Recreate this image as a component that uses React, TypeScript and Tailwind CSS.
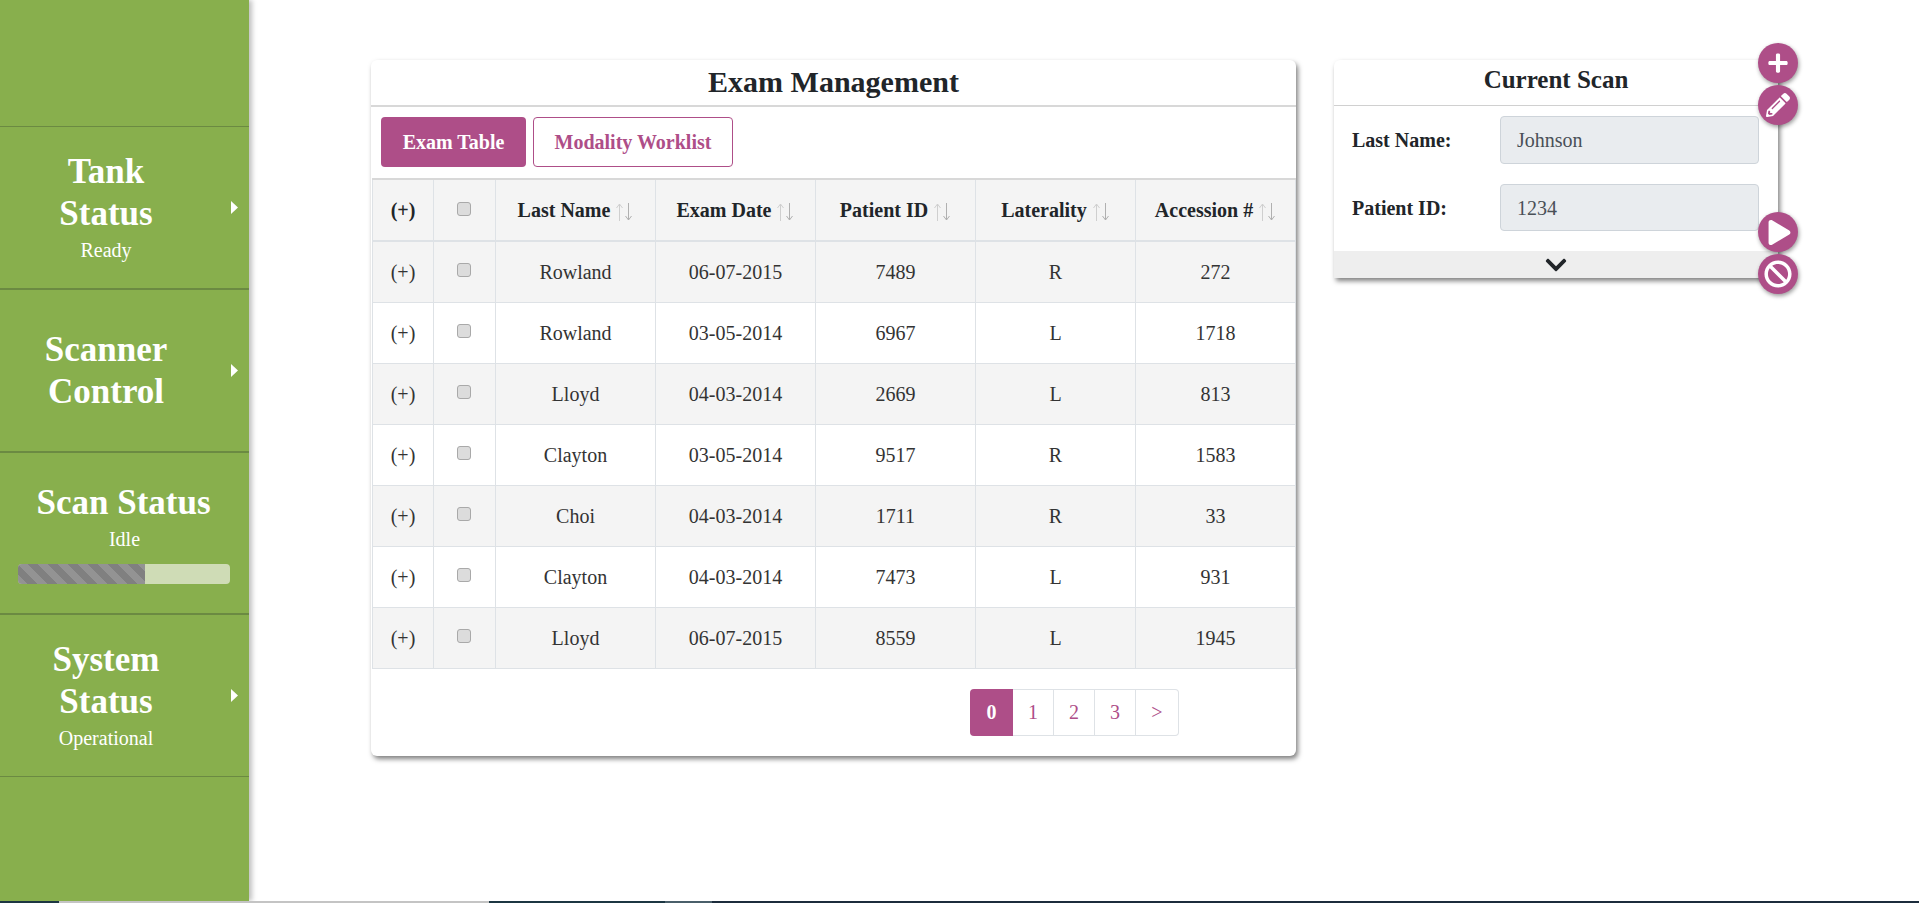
import { FaBan, FaChevronDown, FaPencilAlt, FaPlay, FaPlus } from "react-icons/fa";

const rows = [
	["Rowland", "06-07-2015", "7489", "R", "272"],
	["Rowland", "03-05-2014", "6967", "L", "1718"],
	["Lloyd", "04-03-2014", "2669", "L", "813"],
	["Clayton", "03-05-2014", "9517", "R", "1583"],
	["Choi", "04-03-2014", "1711", "R", "33"],
	["Clayton", "04-03-2014", "7473", "L", "931"],
	["Lloyd", "06-07-2015", "8559", "L", "1945"],
];

const columns = ["Last Name", "Exam Date", "Patient ID", "Laterality", "Accession #"];

function Caret() {
	return (
		<svg viewBox="0 0 7 13" className="h-[13px] w-[7px] shrink-0 fill-white">
			<polygon points="0,0 7,6.5 0,13" />
		</svg>
	);
}

function SortArrows() {
	return (
		<svg viewBox="0 0 18 18" className="ml-[5px] inline-block h-[18px] w-[18px] align-[-4px] fill-none">
			<g stroke="#cfcfcf" strokeWidth="1">
				<path d="M4.5 18V1" />
				<path d="M1.5 5L4.5 1L7.5 5" />
			</g>
			<g stroke="#b0b0b0" strokeWidth="1">
				<path d="M13.5 0V17" />
				<path d="M10.5 13L13.5 17L16.5 13" />
			</g>
		</svg>
	);
}

function NavItem({ title, status, className }: { title: string[]; status?: string; className: string }) {
	return (
		<div className={`flex items-center border-[#6b8a42] pr-[11px] ${className}`}>
			<div className={`w-[212px] text-center text-white ${status ? "pb-[2px]" : ""}`}>
				{title.map((line) => (
					<div key={line} className="text-[35px] leading-[42px] font-bold">
						{line}
					</div>
				))}
				{status && <div className="mt-[3px] text-[20px] leading-[24px]">{status}</div>}
			</div>
			<div className="ml-[19px]">
				<Caret />
			</div>
		</div>
	);
}

function Checkbox() {
	return <div className="mb-[3px] ml-[23px] h-[14px] w-[14px] rounded-[3px] border border-[#a9a9a9] bg-[#dcdcdc]" />;
}

function RoundButton({ className, children }: { className: string; children: React.ReactNode }) {
	return (
		<div
			className={`absolute right-[-20px] flex h-[40px] w-[40px] items-center justify-center rounded-full bg-[#ae4e88] text-white shadow-[1px_2px_4px_rgba(0,0,0,0.4)] ${className}`}
		>
			{children}
		</div>
	);
}

function FormRow({ label, value, height }: { label: string; value: string; height: string }) {
	return (
		<div className="flex items-center">
			<div className="w-[166px] pl-[18px] text-[20px] font-bold">{label}</div>
			<div className={`flex w-[259px] items-center rounded-[4px] border border-[#ced4da] bg-[#e9ecef] pl-[16px] text-[20px] text-[#495057] ${height}`}>
				{value}
			</div>
		</div>
	);
}

export default function App() {
	return (
		<div className="flex h-[903px] flex-col overflow-hidden bg-white font-['Liberation_Serif',serif] text-[#212529]">
			<div className="flex flex-1">
				<aside className="w-[249px] shrink-0 bg-[#88af4d] shadow-[3px_0_5px_rgba(0,0,0,0.25)]">
					<div className="h-[127px] border-b border-[#6b8a42]" />
					<NavItem title={["Tank", "Status"]} status="Ready" className="h-[163px] border-b-2" />
					<NavItem title={["Scanner", "Control"]} className="h-[163px] border-b-2" />
					<div className="h-[162px] border-b-2 border-[#6b8a42] px-[18px] pt-[29px] text-center text-white">
						<div className="mr-[2px] text-[35px] leading-[42px] font-bold">Scan Status</div>
						<div className="mt-[3px] text-[20px] leading-[24px]">Idle</div>
						<div className="mt-[13px] flex h-[20px] w-[212px] overflow-hidden rounded-[4px] bg-[#cfdcb6]">
							<div className="h-full w-[127px] bg-[#808080] bg-[linear-gradient(45deg,rgba(255,255,255,0.15)_25%,transparent_25%,transparent_50%,rgba(255,255,255,0.15)_50%,rgba(255,255,255,0.15)_75%,transparent_75%,transparent)] bg-[length:20px_20px]" />
						</div>
					</div>
					<NavItem title={["System", "Status"]} status="Operational" className="h-[162px] border-b" />
				</aside>

				<main className="flex flex-1 items-start gap-[38px] pt-[60px] pl-[122px]">
					<section className="h-[696px] w-[925px] rounded-[6px] bg-white shadow-[2px_3px_5px_rgba(0,0,0,0.5)]">
						<h1 className="h-[47px] border-b-2 border-[#d8d8d8] text-center text-[30px] leading-[44px] font-bold">
							Exam Management
						</h1>
						<div className="flex h-[71px] items-start gap-[7px] pt-[10px] pl-[10px]">
							<button className="h-[50px] w-[145px] rounded-[4px] bg-[#ae4e88] text-[20px] font-bold text-white">
								Exam Table
							</button>
							<button className="h-[50px] w-[200px] rounded-[4px] border border-[#ae4e88] text-[20px] font-bold text-[#ae4e88]">
								Modality Worklist
							</button>
						</div>
						<table className="ml-px w-[923px] table-fixed border-collapse border-t-2 border-[#d8d8d8] text-center text-[20px]">
							<colgroup>
								<col className="w-[61px]" />
								<col className="w-[62px]" />
								<col className="w-[160px]" />
								<col className="w-[160px]" />
								<col className="w-[160px]" />
								<col className="w-[160px]" />
								<col className="w-[160px]" />
							</colgroup>
							<thead>
								<tr className="h-[62px] bg-[#f4f4f4]">
									<th className="border border-b-2 border-[#dee2e6] font-bold">(+)</th>
									<th className="border border-b-2 border-[#dee2e6]">
										<Checkbox />
									</th>
									{columns.map((c) => (
										<th key={c} className="border border-b-2 border-[#dee2e6] font-bold whitespace-nowrap">
											{c}
											<SortArrows />
										</th>
									))}
								</tr>
							</thead>
							<tbody>
								{rows.map((r, i) => (
									<tr key={i} className={`h-[61px] ${i % 2 === 0 ? "bg-[#f4f4f4]" : "bg-white"}`}>
										<td className="border border-[#dee2e6] text-[#333333]">(+)</td>
										<td className="border border-[#dee2e6]">
											<Checkbox />
										</td>
										{r.map((v, j) => (
											<td key={j} className="border border-[#dee2e6] text-[#333333]">
												{v}
											</td>
										))}
									</tr>
								))}
							</tbody>
						</table>
						<div className="mt-[20px] ml-[599px] flex h-[47px] w-[209px] text-[20px] text-[#ae4e88]">
							<div className="flex w-[43px] items-center justify-center rounded-l-[4px] bg-[#ae4e88] font-bold text-white">0</div>
							{["1", "2", "3"].map((p) => (
								<div key={p} className="flex w-[41px] items-center justify-center border-y border-r border-[#dee2e6]">
									{p}
								</div>
							))}
							<div className="flex w-[43px] items-center justify-center rounded-r-[4px] border-y border-r border-[#dee2e6]">&gt;</div>
						</div>
					</section>

					<section className="relative h-[218px] w-[444px] rounded-t-[6px] bg-white shadow-[2px_3px_5px_rgba(0,0,0,0.5)]">
						<h2 className="h-[46px] border-b border-[#d0d0d0] text-center text-[25px] leading-[40px] font-bold">
							Current Scan
						</h2>
						<div className="flex h-[145px] flex-col gap-[20px] pt-[10px]">
							<FormRow label="Last Name:" value="Johnson" height="h-[48px]" />
							<FormRow label="Patient ID:" value="1234" height="h-[47px]" />
						</div>
						<div className="flex h-[27px] items-center justify-center bg-[#eeeeee]">
							<FaChevronDown className="h-[24px] w-[24px]" />
						</div>
						<RoundButton className="top-[-17px]">
							<FaPlus className="h-[22px] w-[22px]" />
						</RoundButton>
						<RoundButton className="top-[25px]">
							<FaPencilAlt className="h-[24px] w-[24px]" />
						</RoundButton>
						<RoundButton className="top-[152px]">
							<FaPlay className="ml-[2px] h-[25px] w-[25px]" />
						</RoundButton>
						<RoundButton className="top-[194px]">
							<FaBan className="h-[28px] w-[28px]" />
						</RoundButton>
					</section>
				</main>
			</div>
			<div className="flex h-[2px] shrink-0 bg-[#1c2c3c]">
				<div className="w-[59px] bg-[#1c3642]" />
				<div className="w-[430px] bg-[#c4c4c4]" />
				<div className="w-[176px] bg-[#1c3642]" />
				<div className="w-[47px] bg-[#4a5f6a]" />
			</div>
		</div>
	);
}
